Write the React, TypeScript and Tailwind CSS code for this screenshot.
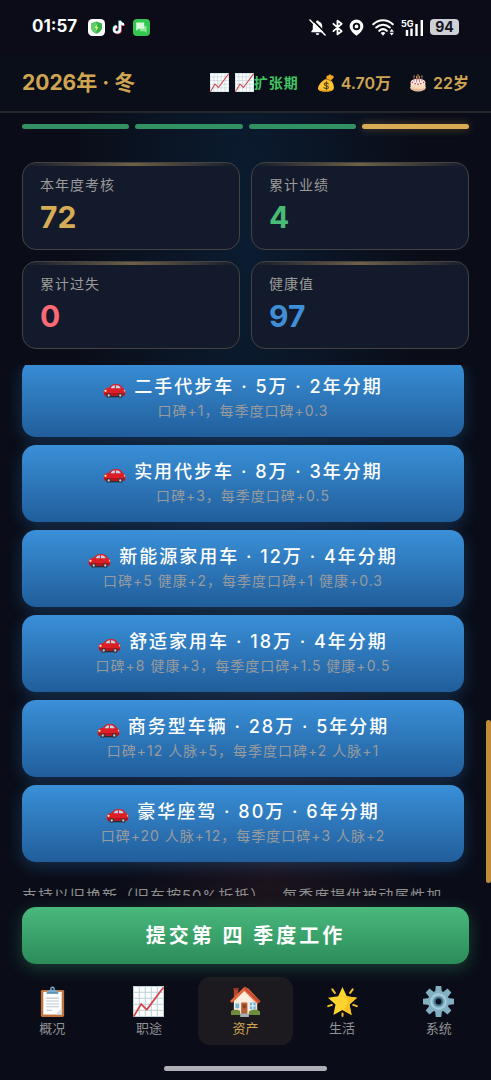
import React, { useState } from 'react';

type IconProps = { className?: string };

const CARS = [
  { title: '二手代步车 · 5万 · 2年分期', effect: '口碑+1，每季度口碑+0.3' },
  { title: '实用代步车 · 8万 · 3年分期', effect: '口碑+3，每季度口碑+0.5' },
  { title: '新能源家用车 · 12万 · 4年分期', effect: '口碑+5 健康+2，每季度口碑+1 健康+0.3' },
  { title: '舒适家用车 · 18万 · 4年分期', effect: '口碑+8 健康+3，每季度口碑+1.5 健康+0.5' },
  { title: '商务型车辆 · 28万 · 5年分期', effect: '口碑+12 人脉+5，每季度口碑+2 人脉+1' },
  { title: '豪华座驾 · 80万 · 6年分期', effect: '口碑+20 人脉+12，每季度口碑+3 人脉+2' },
];

const STATS = [
  { label: '本年度考核', value: '72', color: 'text-[#d6ac56]' },
  { label: '累计业绩', value: '4', color: 'text-[#48bb78]' },
  { label: '累计过失', value: '0', color: 'text-[#fb6a74]' },
  { label: '健康值', value: '97', color: 'text-[#3f8fd8]' },
];

const ChartIcon: React.FC<IconProps> = ({ className }) => (
  <svg viewBox="0 0 32 32" className={className} aria-hidden="true">
    <rect width="32" height="32" fill="#fbfdfd" />
    <path
      d="M0 .5h32M0 6.5h32M0 12.7h32M0 18.9h32M0 25.1h32M0 31.5h32M.5 0v32M6.5 0v32M12.7 0v32M18.9 0v32M25.1 0v32M31.5 0v32"
      stroke="#bcd0d6"
      strokeWidth="1"
    />
    <path d="M1 31 8.4 18.6l5.800 5.800L31 2" fill="none" stroke="#d0464c" strokeWidth="1.8" strokeLinejoin="round" strokeLinecap="round" />
  </svg>
);

const MoneyIcon: React.FC<IconProps> = ({ className }) => (
  <svg viewBox="0 0 32 32" className={className} aria-hidden="true">
    <path d="M17 7c-1-3 1-5 3-4 1-3 5-3 6 0 3-1 5 1 3 4l-5 5-5-1z" fill="#f6a823" />
    <path d="M18 8c-5 1-14 8-16 16-1 5 2 7 13 7s15-2 15-7c0-6-3-11-6-14z" fill="#fcc332" />
    <path d="M16 10c3-1 6 0 8 2" stroke="#b57a1c" strokeWidth="2.4" fill="none" strokeLinecap="round" />
    <path d="M4 26c3 3 20 4 25 0-1 4-5 5-14 5-8 0-11-2-11-5z" fill="#eaa21f" />
    <path d="M20 17.500c-1-2.500-7-2.500-7 .8 0 3.400 7.200 1.700 7.200 5.300 0 3.300-6.400 3.400-7.800.6M16.800 13.800v13.700" stroke="#5c4620" strokeWidth="2" fill="none" strokeLinecap="round" />
  </svg>
);

const CakeIcon: React.FC<IconProps> = ({ className }) => (
  <svg viewBox="0 0 32 32" className={className} aria-hidden="true">
    <path d="M2 23c0 5 6 8 14 8s14-3 14-8z" fill="#c9b9ae" />
    <path d="M3 14v11c0 3 6 5 13 5s13-2 13-5V14z" fill="#f0b48a" />
    <path d="M3 19v5c4 4 22 4 26 0v-5z" fill="#f7d9b8" />
    <ellipse cx="16" cy="14" rx="13" ry="5.500" fill="#fff3ee" />
    <path d="M3 14c0 7 3 6 5 4s4 5 7 2 5 3 7 0 6 3 7-6c-3 6-23 6-26 0z" fill="#fff3ee" />
    <path d="M9 13V6M13.500 15V7M18.500 15V7M23 13V6M16 11V4" stroke="#b86f72" strokeWidth="1.600" />
    <path d="M9 5V3M13.500 6V4M18.500 6V4M23 5V3M16 3V1" stroke="#d9a65b" strokeWidth="1.800" strokeLinecap="round" />
    <g fill="#dc4450">
      <circle cx="6" cy="15" r="1.500" />
      <circle cx="11" cy="17" r="1.500" />
      <circle cx="16" cy="18" r="1.500" />
      <circle cx="21" cy="17" r="1.500" />
      <circle cx="26" cy="15" r="1.500" />
    </g>
  </svg>
);

const CarIcon: React.FC<IconProps> = ({ className }) => (
  <svg viewBox="0 -2 32 32" className={className} aria-hidden="true">
    <path d="M5 27h22v2H5z" fill="#2a2a31" />
    <path d="M1 22c0-4 3-5.500 7-6.200C10.500 12.300 13 10.500 18 10.500c5.500 0 7.500 2 9.200 5.100C30 17 31 19 31 22.500c0 3.500-.8 4.500-2.500 4.500H4c-2 0-3-1.600-3-5z" fill="#dc1f26" />
    <path d="M1.500 23h29v2.500c-.6 1-1.200 1.500-2 1.500H4c-1.500 0-2.200-1-2.500-4z" fill="#b3141c" />
    <path d="M10.500 16.500c1.500-3 3.200-4.100 6-4.300v4.300zM18 12.200c4 0 5.600 1.400 6.700 4.300H18z" fill="#b9d9ee" />
    <circle cx="8" cy="26.500" r="3" fill="#33343b" />
    <circle cx="8" cy="26.500" r="1.600" fill="#c9cdd2" />
    <circle cx="24" cy="26.500" r="3" fill="#33343b" />
    <circle cx="24" cy="26.500" r="1.600" fill="#c9cdd2" />
    <circle cx="3.500" cy="20" r="1.600" fill="#ffe9a8" />
    <path d="M29 18.500h1.600l.4 2.500h-2z" fill="#ffb199" />
  </svg>
);

const ClipboardIcon: React.FC<IconProps> = ({ className }) => (
  <svg viewBox="0 0 32 32" className={className} aria-hidden="true">
    <rect x="4" y="4" width="24" height="28" rx="1.500" fill="#c0733d" />
    <path d="M6.500 6h19v23.500h-19z" fill="#fff" />
    <path d="M19 29.500h6.500V23z" fill="#d5dde2" />
    <path d="M9.500 12.500h13M9.500 15.500h13M9.500 18.500h13M9.500 21.500h13M9.500 25h6" stroke="#b7c3ca" strokeWidth="1.100" />
    <path d="M10 7.500c0-3 2.500-3 3.500-3.500C13.500 1.500 14.500.5 16 .5S18.500 1.500 18.500 4c1 .5 3.500.5 3.500 3.500z" fill="#78aecb" />
    <circle cx="16" cy="3.200" r="1.200" fill="#16314a" />
    <path d="M10 6.500h12v1.500H10z" fill="#4f88a8" />
  </svg>
);

const HouseIcon: React.FC<IconProps> = ({ className }) => (
  <svg viewBox="0 0 32 32" className={className} aria-hidden="true">
    <path d="M4 3h4.500v9H4z" fill="#b4472f" />
    <path d="M3.500 2h5.500v2H3.500z" fill="#8f3524" />
    <path d="M4 15 14.500 4.500 28 17v12H4z" fill="#fbeedd" />
    <path d="M14.500 4.500 28 17v12h-5V15z" fill="#f1ddc5" />
    <path d="M15 .8 0 15.500 2 17.500 14.800 5.200l13.400 13.200L31.500 16 19 2.500z" fill="#e2663f" />
    <path d="M15 .8 31.500 16l-2 1.500L14.800 3.200z" fill="#c34b2c" />
    <rect x="11.500" y="17" width="6.500" height="12" rx="1" fill="#b5613b" />
    <rect x="13" y="19" width="3.500" height="4" fill="#8d4527" />
    <rect x="20.500" y="17" width="6" height="7" fill="#6fb7dd" />
    <path d="M23.500 17v7M20.500 20.500h6" stroke="#fff" strokeWidth=".9" />
    <rect x="5.500" y="18" width="4" height="5" fill="#6fb7dd" />
    <path d="M1 26c2-2 8-2 9.500 0v4H1zM19.500 26.500c2-2.500 10-2.500 11.500 0V30H19.500z" fill="#6d8d3c" />
    <path d="M10.500 28.500h9V32h-9z" fill="#a9b0b8" />
  </svg>
);

const StarIcon: React.FC<IconProps> = ({ className }) => (
  <svg viewBox="0 0 32 32" className={className} aria-hidden="true">
    <path d="m16 1 4.400 9.600L31 12l-7.800 7.200L25.400 30 16 24.800 6.600 30l2.200-10.800L1 12l10.600-1.400z" fill="#fdd32f" />
    <path d="M20.400 10.600 31 12l-7.800 7.200L25.400 30 16 24.800c5-2 6.500-8 4.400-14.200z" fill="#f8c021" />
    <path d="m5.500 3.500 2.600 3.600M26.500 3.500l-2.600 3.600M1.200 20.800l3.800-1.300M30.800 20.800 27 19.500M16 28.300V31" stroke="#f8c02a" strokeWidth="2" strokeLinecap="round" />
  </svg>
);

const GearIcon: React.FC<IconProps> = ({ className }) => (
  <svg viewBox="0 0 32 32" className={className} aria-hidden="true">
    <g fill="#82afc2">
      <path d="M13.200 0h5.600l.8 7h-7.200zM13.200 32h5.600l.8-7h-7.200z" />
      <path d="M0 13.200v5.600l7 .8v-7.200zM32 13.200v5.600l-7 .8v-7.200z" />
      <path d="m2.700 6.700 4-4L12 7l-5 5zM29.300 6.700l-4-4L20 7l5 5zM2.700 25.300l4 4L12 25l-5-5zM29.300 25.300l-4 4L20 25l5-5z" />
      <circle cx="16" cy="16" r="11" />
    </g>
    <circle cx="16" cy="16" r="7.500" fill="none" stroke="#a7cddc" strokeWidth="2" />
    <circle cx="16" cy="16" r="5" fill="#47778c" />
    <circle cx="16" cy="16" r="3" fill="#0b101e" />
  </svg>
);

const TABS = [
  { label: '概况', Icon: ClipboardIcon },
  { label: '职途', Icon: ChartIcon },
  { label: '资产', Icon: HouseIcon },
  { label: '生活', Icon: StarIcon },
  { label: '系统', Icon: GearIcon },
];

const StatusBar: React.FC = () => (
  <div className="flex h-[54px] shrink-0 items-center justify-between bg-[#0b0c17] px-8">
    <div className="flex items-center gap-[7px]">
      <span className="mr-1 text-[17px] font-bold text-white">01:57</span>
      <svg viewBox="0 0 17 17" className="size-[17px]" aria-hidden="true">
        <rect width="17" height="17" rx="4.500" fill="#fff" />
        <path d="M8.500 2.500 14 4.500v4c0 3-2.500 5-5.500 6.300C5.500 13.500 3 11.500 3 8.500v-4z" fill="#35b34a" />
        <path d="M8.500 2.500V14.800C5.500 13.500 3 11.500 3 8.500v-4z" fill="#5fcb6c" />
        <path d="m9.300 5-3 4h2l-.6 3 3-4h-2z" fill="#d9f56a" />
      </svg>
      <svg viewBox="0 0 14 16" className="h-4 w-[14px]" aria-hidden="true">
        <g fill="none" strokeWidth="2.200">
          <path d="M8 2v8.500A2.900 2.900 0 1 1 5 7.700M8 2c.3 2 1.800 3.300 4 3.400" stroke="#35d6dc" transform="translate(-.6 -.5)" />
          <path d="M8 2v8.500A2.900 2.900 0 1 1 5 7.700M8 2c.3 2 1.800 3.300 4 3.400" stroke="#ef3a5d" transform="translate(.7 .6)" />
          <path d="M8 2v8.500A2.900 2.900 0 1 1 5 7.700M8 2c.3 2 1.800 3.300 4 3.400" stroke="#fff" />
        </g>
      </svg>
      <svg viewBox="0 0 17 17" className="size-[17px]" aria-hidden="true">
        <rect width="17" height="17" rx="4" fill="#35c651" />
        <path d="M7 7h6.500v7l-2-1.800H7z" fill="#8fe79c" />
        <path d="M3.200 3.500h8v6.300H6l-2.800 2z" fill="#d6f8da" />
      </svg>
    </div>
    <div className="flex items-center gap-[6px] text-white">
      <svg viewBox="0 0 18 18" className="size-[17px]" aria-hidden="true">
        <path d="M9 1.500c.8 0 1.300.5 1.300 1.200 2.400.7 3.700 2.600 3.700 5v3.500l1.600 2v.8H2.400v-.8l1.600-2V7.700c0-2.400 1.300-4.300 3.700-5C7.700 2 8.200 1.500 9 1.500zM7.200 15h3.600c0 1.200-.8 2-1.800 2s-1.800-.8-1.800-2z" fill="currentColor" />
        <path d="M2.600-.2 18.500 15.700" stroke="#0b0c17" strokeWidth="1.800" />
        <path d="M1 1l16 16" stroke="currentColor" strokeWidth="1.600" strokeLinecap="round" />
      </svg>
      <svg viewBox="0 0 12 18" className="h-[17px] w-[11px]" aria-hidden="true">
        <path d="m1.500 5 9 8L6 16.500v-15L10.500 5l-9 8" fill="none" stroke="currentColor" strokeWidth="2" strokeLinejoin="round" strokeLinecap="round" />
      </svg>
      <svg viewBox="0 0 16 18" className="h-[17px] w-[15px]" aria-hidden="true">
        <path fillRule="evenodd" d="M8 .5a7.300 7.300 0 0 1 7.300 7.200C15.300 12 11.500 15 8 17.800 4.500 15 .7 12 .7 7.700A7.300 7.300 0 0 1 8 .5zm0 3.300a4 4 0 1 0 0 8 4 4 0 0 0 0-8z" fill="currentColor" />
        <circle cx="8" cy="7.800" r="2" fill="currentColor" />
      </svg>
      <svg viewBox="0 0 24 18" className="ml-[2px] h-[17px] w-[23px]" aria-hidden="true">
        <g fill="none" stroke="currentColor" strokeWidth="2.200" strokeLinecap="round">
          <path d="M1.200 5.500c6-5.600 14.600-5.600 20.600 0" />
          <path d="M4.300 9c4.200-4 10.200-4 14.400 0" />
          <path d="M7.500 12.500c2.400-2.200 5.600-2.200 8 0" />
        </g>
        <path d="M9 14.800c1.500-1.300 3.500-1.300 5 0l-2.500 3z" fill="currentColor" />
        <path d="m20.700 10.500 2.300 3h-4.600zM20.700 17.500l2.300-3h-4.600z" fill="currentColor" />
      </svg>
      <div className="relative h-[17px] w-[23px]">
        <span className="absolute top-0 left-0 text-[9px] leading-none font-bold">5G</span>
        <svg viewBox="0 0 23 17" className="h-[17px] w-[23px]" aria-hidden="true">
          <path d="M6 17v-6M10.500 17V9.500M15.500 17V5M20.800 17V1" stroke="currentColor" strokeWidth="2.400" />
        </svg>
      </div>
      <span className="flex h-4 w-[29px] items-center justify-center rounded-[4px] bg-[#cfcfd6] text-sm font-bold text-[#14151f]">
        94
      </span>
    </div>
  </div>
);

export default function App() {
  const [activeTab, setActiveTab] = useState('资产');

  return (
    <div className="relative flex h-screen flex-col overflow-hidden bg-[#0a0d18] bg-[radial-gradient(ellipse_at_50%_22%,#0b1c31_0%,transparent_50%),radial-gradient(ellipse_at_55%_82%,#1c131d_0%,transparent_40%)] font-['Inter','Noto_Sans_CJK_SC',sans-serif]">
      <StatusBar />

      {/* Header */}
      <header className="flex h-[59px] shrink-0 items-center justify-between border-b-2 border-[#25262a] bg-[#0a0e19] px-[22px]">
        <h1 className="text-[21px] font-bold whitespace-nowrap text-[#d0a552]">2026年 · 冬</h1>
        <div className="flex items-center gap-[18px] text-base font-semibold whitespace-nowrap text-[#cfa453]">
          <span className="flex items-center gap-[6px]">
            <ChartIcon className="size-[19px]" />
            <span className="flex items-center text-sm tracking-[1px] text-[#43c463]">
              <ChartIcon className="size-[19px]" />
              扩张期
            </span>
          </span>
          <span className="flex items-center gap-[6px]">
            <MoneyIcon className="size-[18px]" />
            4.70万
          </span>
          <span className="flex items-center gap-[6px]">
            <CakeIcon className="size-[18px]" />
            22岁
          </span>
        </div>
      </header>

      {/* Quarter progress */}
      <div className="mx-[22px] mt-[11px] grid shrink-0 grid-cols-4 gap-[6px]">
        <div className="h-[5px] rounded-full bg-[#319163]" />
        <div className="h-[5px] rounded-full bg-[#319163]" />
        <div className="h-[5px] rounded-full bg-[#319163]" />
        <div className="h-[5px] rounded-full bg-[#d8ab54] shadow-[0_0_8px_rgba(212,168,83,0.4)]" />
      </div>

      {/* Stats */}
      <dl className="mx-[22px] mt-[33px] grid shrink-0 grid-cols-2 gap-[11px]">
        {STATS.map((stat) => (
          <div key={stat.label} className="relative h-[88px] overflow-hidden rounded-[14px] border border-[#444341] bg-[#131a2b] px-[17px] pt-3">
            <div className="absolute inset-x-0 top-0 h-[3px] bg-linear-to-r from-transparent via-[#6f6047] to-transparent" />
            <dt className="text-sm tracking-[1px] text-[#9b9a98]">{stat.label}</dt>
            <dd className={`mt-1 text-3xl font-bold ${stat.color}`}>{stat.value}</dd>
          </div>
        ))}
      </dl>

      {/* Car list */}
      <main className="mt-4 min-h-0 flex-1 overflow-hidden pr-[27px] pl-[22px]">
        <div className="-mt-[5px] flex flex-col gap-2">
          {CARS.map((car) => (
            <button
              key={car.title}
              type="button"
              className="h-[77px] w-full rounded-[14px] bg-linear-to-b from-[#3a90d8] to-[#215e9b] text-center whitespace-nowrap shadow-[0_4px_16px_rgba(49,130,206,0.3)]"
            >
              <span className="flex items-center justify-center gap-2 text-lg leading-6 font-medium tracking-[2px] text-white">
                <CarIcon className="size-[23px]" />
                {car.title}
              </span>
              <span className="block text-sm leading-6 tracking-[1px] text-[#989b9e]">{car.effect}</span>
            </button>
          ))}
        </div>
        <p className="mt-[22px] pr-3 text-[15px] leading-6 tracking-[1px] text-[#8f8f90] [text-spacing-trim:space-all]">
          支持以旧换新（旧车按50%折抵），每季度提供被动属性加成
        </p>
      </main>
      <div className="absolute top-2/3 right-0 h-[163px] w-[5px] rounded-full bg-[#bd8d39]" />

      <button
        type="button"
        className="relative mx-[22px] mt-[11px] h-[57px] shrink-0 rounded-[14px] bg-linear-to-b from-[#49b97d] to-[#2c8c5a] text-xl font-bold tracking-[3px] text-white shadow-[0_4px_16px_rgba(56,161,105,0.35)]"
      >
        提交第 四 季度工作
      </button>

      {/* Tabs */}
      <footer className="shrink-0 bg-[#0a0d18] pt-[13px] pb-[9px]">
        <nav className="grid grid-cols-5 gap-[2px] px-[5px]">
          {TABS.map(({ label, Icon }) => (
            <button
              key={label}
              type="button"
              onClick={() => setActiveTab(label)}
              className={`flex h-[68px] flex-col items-center justify-center gap-[2px] rounded-xl text-[13px] leading-[18px] ${
                activeTab === label ? 'bg-[#1c1a1f] text-[#cfa453]' : 'text-[#929294]'
              }`}
            >
              <Icon className="size-[31px]" />
              {label}
            </button>
          ))}
        </nav>
        <div className="mx-auto mt-[21px] h-[5px] w-1/3 rounded-full bg-[#b0b1b6]" />
      </footer>
    </div>
  );
}
